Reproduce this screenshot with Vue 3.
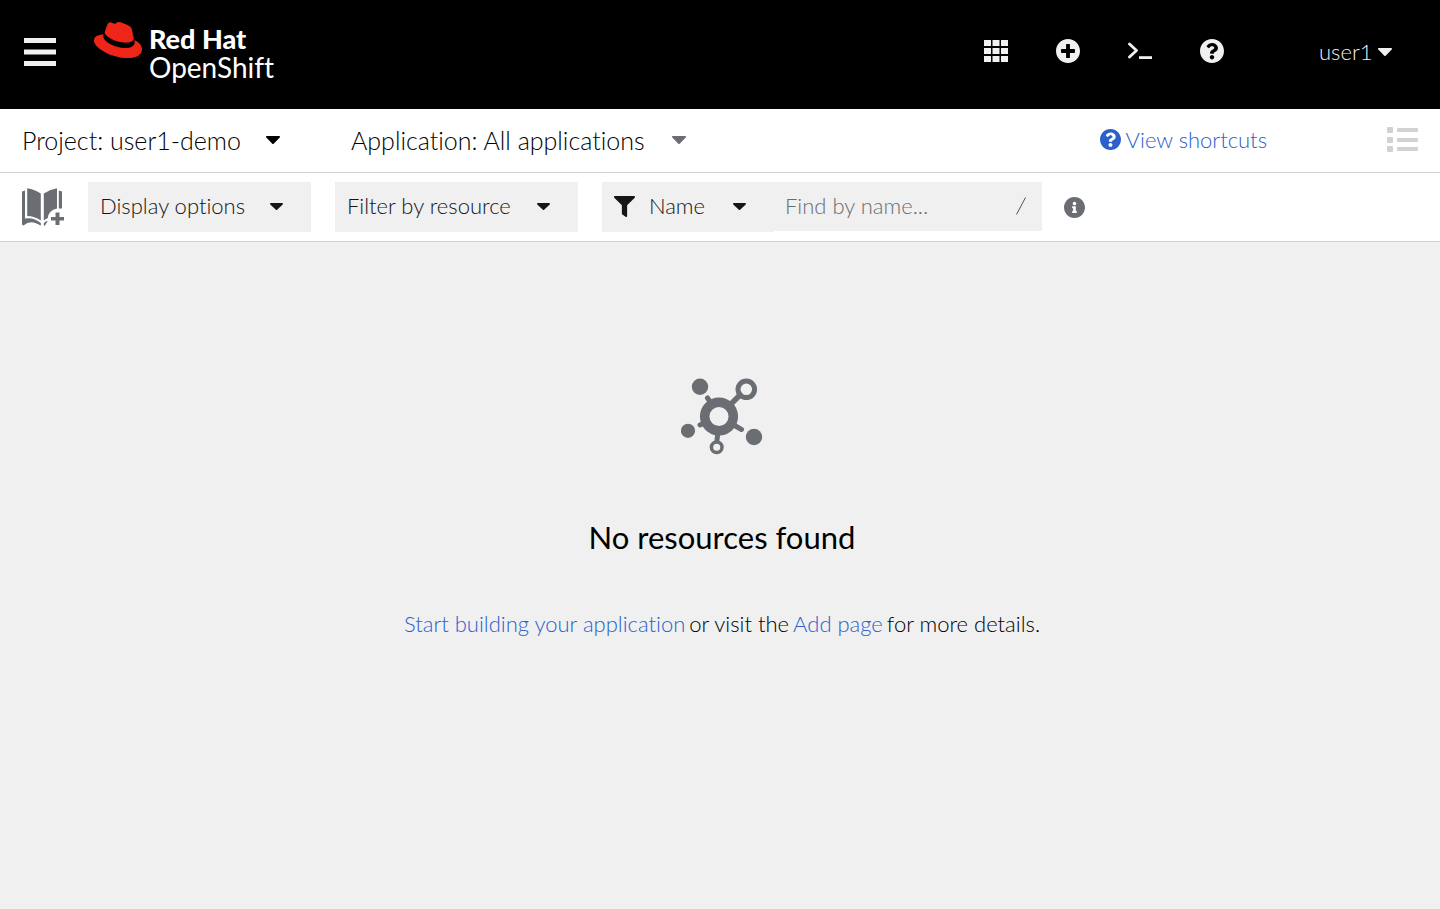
<script setup>
import { ref } from 'vue'

const search = ref('')

const icons = {
  plus: 'M256 8C119 8 8 119 8 256s111 248 248 248 248-111 248-248S393 8 256 8zm144 276c0 6.6-5.4 12-12 12h-92v92c0 6.6-5.4 12-12 12h-56c-6.6 0-12-5.4-12-12v-92h-92c-6.6 0-12-5.4-12-12v-56c0-6.6 5.4-12 12-12h92v-92c0-6.6 5.4-12 12-12h56c6.6 0 12 5.4 12 12v92h92c6.6 0 12 5.4 12 12v56z',
  question: 'M504 256c0 136.997-111.043 248-248 248S8 392.997 8 256C8 119.083 119.043 8 256 8s248 111.083 248 248zM262.655 90c-54.497 0-89.255 22.957-116.549 63.758-3.536 5.286-2.353 12.415 2.715 16.258l34.699 26.31c5.205 3.947 12.621 3.008 16.665-2.122 17.864-22.658 30.113-35.797 57.303-35.797 20.429 0 45.698 13.148 45.698 32.958 0 14.976-12.363 22.667-32.534 33.976C247.128 238.528 216 254.941 216 296v4c0 6.627 5.373 12 12 12h56c6.627 0 12-5.373 12-12v-1.333c0-28.462 83.186-29.647 83.186-106.667 0-58.002-60.165-102-116.531-102zM256 338c-25.365 0-46 20.635-46 46 0 25.364 20.635 46 46 46s46-20.636 46-46c0-25.365-20.635-46-46-46z',
  info: 'M256 8C119.043 8 8 119.083 8 256c0 136.997 111.043 248 248 248s248-111.003 248-248C504 119.083 392.957 8 256 8zm0 110c23.196 0 42 18.804 42 42s-18.804 42-42 42-42-18.804-42-42 18.804-42 42-42zm56 254c0 6.627-5.373 12-12 12h-88c-6.627 0-12-5.373-12-12v-24c0-6.627 5.373-12 12-12h12v-64h-12c-6.627 0-12-5.373-12-12v-24c0-6.627 5.373-12 12-12h64c6.627 0 12 5.373 12 12v100h12c6.627 0 12 5.373 12 12v24z',
  filter: 'M487.976 0H24.028C2.71 0-8.047 25.866 7.058 40.971L192 225.941V432c0 7.831 3.821 15.17 10.237 19.662l80 55.98C298.02 518.69 320 507.493 320 487.98V225.941l184.947-184.97C520.021 25.896 509.338 0 487.976 0z',
  caret: 'M31.3 192h257.3c17.8 0 26.7 21.5 14.1 34.1L174.1 354.8c-7.8 7.8-20.5 7.8-28.3 0L17.2 226.1C4.6 213.5 13.5 192 31.3 192z'
}
</script>

<template>
  <div class="page">
    <header class="masthead">
      <button class="menu" type="button" aria-label="Toggle navigation">
        <svg width="32" height="28" viewBox="0 0 32 28" fill="currentColor">
          <path d="M0 0h32v5H0zM0 11.5h32v5H0zM0 23h32v5H0z" />
        </svg>
      </button>
      <a class="brand" href="#">
        <svg class="hat" width="48" height="36" viewBox="0 3 24 18" aria-hidden="true">
          <path fill="#ee2519" d="M16.009 13.386c1.577 0 3.86-.326 3.86-2.202a1.765 1.765 0 0 0-.04-.431l-.94-4.08c-.216-.898-.406-1.305-1.982-2.093-1.223-.625-3.888-1.658-4.676-1.658-.733 0-.947.946-1.822.946-.842 0-1.467-.706-2.255-.706-.757 0-1.25.515-1.63 1.576 0 0-1.06 2.99-1.197 3.424a.81.81 0 0 0-.028.245c0 1.162 4.577 4.974 10.71 4.974m4.101-1.435c.218 1.032.218 1.14.218 1.277 0 1.765-1.984 2.745-4.593 2.745-5.895.004-11.06-3.451-11.06-5.734a2.326 2.326 0 0 1 .19-.925C2.746 9.415 0 9.794 0 12.217c0 3.969 9.405 8.861 16.851 8.861 5.71 0 7.149-2.582 7.149-4.62 0-1.605-1.387-3.425-3.887-4.512" />
        </svg>
        <span class="brand-text"><strong>Red Hat</strong><span>OpenShift</span></span>
      </a>
      <nav class="tools" aria-label="Tools">
        <button type="button" aria-label="Applications">
          <svg width="24" height="22" viewBox="0 0 24 22" fill="currentColor">
            <path d="M0 0h7v6H0zM8.500 0h7v6h-7zM17 0h7v6h-7zM0 8h7v6H0zM8.500 8h7v6h-7zM17 8h7v6h-7zM0 16h7v6H0zM8.500 16h7v6h-7zM17 16h7v6h-7z" />
          </svg>
        </button>
        <button type="button" aria-label="Add">
          <svg width="24" height="24" viewBox="8 8 496 496" fill="currentColor"><path :d="icons.plus" /></svg>
        </button>
        <button type="button" aria-label="Command line">
          <svg width="24" height="18" viewBox="0 0 24 18" fill="none" stroke="currentColor" stroke-width="2.800" stroke-linecap="round" stroke-linejoin="round">
            <path d="M1.500 2l7 6.500-7 6.500" />
            <path d="M11 14.200h13v2.800H11z" fill="currentColor" stroke="none" />
          </svg>
        </button>
        <button type="button" aria-label="Help">
          <svg width="24" height="24" viewBox="8 8 496 496" fill="currentColor"><path :d="icons.question" /></svg>
        </button>
      </nav>
      <button class="user" type="button">
        user1
        <svg class="caret" width="14" height="8" viewBox="11 192 298 169" preserveAspectRatio="none"><path :d="icons.caret" /></svg>
      </button>
    </header>

    <div class="bar context">
      <button class="picker project" type="button">
        Project: user1-demo
        <svg class="caret" width="14" height="8" viewBox="11 192 298 169" preserveAspectRatio="none"><path :d="icons.caret" /></svg>
      </button>
      <button class="picker application" type="button">
        Application: All applications
        <svg class="caret muted" width="14" height="8" viewBox="11 192 298 169" preserveAspectRatio="none"><path :d="icons.caret" /></svg>
      </button>
      <a class="shortcuts" href="#">
        <svg width="21" height="21" viewBox="8 8 496 496" fill="currentColor"><path :d="icons.question" /></svg>
        View shortcuts
      </a>
      <button class="list" type="button" aria-label="List view" disabled>
        <svg width="31" height="26" viewBox="0 0 31 26" fill="currentColor">
          <rect y="0" width="6" height="6" rx="1" /><rect x="10" y="1" width="21" height="4" rx="1" />
          <rect y="10" width="6" height="6" rx="1" /><rect x="10" y="11" width="21" height="4" rx="1" />
          <rect y="19" width="6" height="6" rx="1" /><rect x="10" y="20" width="21" height="4" rx="1" />
        </svg>
      </button>
    </div>

    <div class="bar filters">
      <button class="catalog" type="button" aria-label="Add to project">
        <svg width="42" height="38" viewBox="0 0 42 38" fill="currentColor">
          <path d="M5.200 0.300Q13 1.500 18.800 5.500V32.500Q12.500 28 5.200 28z" />
          <path d="M35 0.300Q27.500 1.500 21.800 5.500V32.500Q23.500 31 25.800 30Q26.500 22.500 35 20.500z" />
          <path d="M0 3.500L3 2.500V30.500Q11.500 28.800 18.800 35V37.800Q9 31 1.500 37.400L0 36.500z" />
          <path d="M36.800 2.500L40 3.500V20.500H36.800z" />
          <path d="M21.800 35.200Q23.500 33 25.800 33L23 37.500L21.800 37.800z" />
          <path d="M33.500 24.500h4v4.500H42v3.500h-4.500V37h-4v-4.500H29V29h4.500z" />
        </svg>
      </button>
      <button class="select display" type="button">
        Display options
        <svg class="caret" width="13" height="7" viewBox="11 192 298 169" preserveAspectRatio="none"><path :d="icons.caret" /></svg>
      </button>
      <button class="select resource" type="button">
        Filter by resource
        <svg class="caret" width="13" height="7" viewBox="11 192 298 169" preserveAspectRatio="none"><path :d="icons.caret" /></svg>
      </button>
      <div class="search">
        <button class="select name" type="button">
          <svg class="funnel" width="21" height="21" viewBox="0 0 512 512" fill="currentColor"><path :d="icons.filter" /></svg>
          Name
          <svg class="caret" width="13" height="7" viewBox="11 192 298 169" preserveAspectRatio="none"><path :d="icons.caret" /></svg>
        </button>
        <label class="field">
          <input v-model="search" type="text" placeholder="Find by name..." aria-label="Find by name" />
          <svg width="10" height="18" viewBox="0 0 10 18" aria-hidden="true"><path d="M0.500 17.500L9.500 0.500" stroke="#4f5255" stroke-width="1" /></svg>
        </label>
      </div>
      <button class="info" type="button" aria-label="Search help">
        <svg width="21" height="21" viewBox="8 8 496 496" fill="currentColor"><path :d="icons.info" /></svg>
      </button>
    </div>

    <main class="empty">
      <svg width="82" height="78" viewBox="21 18 82 78" fill="currentColor" stroke="currentColor" aria-hidden="true">
        <g fill="none" stroke-linecap="round">
          <path stroke-width="5.500" d="M71 44L80 35" />
          <path stroke-width="5" d="M51 43L47.500 38M45 62.500L40 65M72 64L81.500 69.500M58 72L57 80" />
          <circle cx="59" cy="56.500" r="14.300" stroke-width="9.500" />
          <circle cx="86.300" cy="29.300" r="8.300" stroke-width="5" />
          <circle cx="56.700" cy="87.300" r="5.300" stroke-width="3.500" />
        </g>
        <g stroke="none">
          <circle cx="40" cy="26.700" r="8.200" />
          <circle cx="28" cy="70.800" r="7.100" />
          <circle cx="94" cy="77" r="8.200" />
        </g>
      </svg>
      <h1>No resources found</h1>
      <p>
        <a href="#">Start building your application</a>
        <span>or visit the</span>
        <a href="#">Add page</a>
        <span>for more details.</span>
      </p>
    </main>
  </div>
</template>

<style>
body {
  margin: 0;
  background: #f0f0f0;
}
</style>

<style scoped>
.page {
  min-height: 100vh;
  display: flex;
  flex-direction: column;
  background: #f0f0f0;
  color: #000;
  font-family: Lato, "Noto Sans", sans-serif;
  font-weight: 300;
  font-size: 22px;
  line-height: 32px;
  font-variant-ligatures: none;
}
button {
  display: flex;
  align-items: center;
  padding: 0;
  border: 0;
  background: none;
  color: inherit;
  font: inherit;
  font-variant-ligatures: none;
  white-space: nowrap;
  cursor: pointer;
}
a {
  color: #2b5fcc;
  text-decoration: none;
}
svg {
  display: block;
  flex: none;
}
.caret {
  margin-left: auto;
  fill: currentColor;
}
.masthead {
  display: flex;
  align-items: center;
  box-sizing: border-box;
  height: 109px;
  padding: 0 48px 6px 24px;
  background: #000;
  color: #f0f0f0;
}
.brand {
  display: flex;
  align-items: flex-start;
  gap: 7px;
  margin-left: 38px;
  color: #fff;
}
.brand-text {
  display: flex;
  flex-direction: column;
  padding-top: 3px;
  font-size: 28px;
  line-height: 28px;
  font-weight: 400;
}
.brand-text strong {
  font-weight: 900;
  font-size: 27px;
}
.tools {
  display: flex;
  margin-left: auto;
  padding-bottom: 2px;
}
.tools button {
  justify-content: center;
  width: 72px;
}
.user {
  width: 73px;
  margin-left: 71px;
}
.bar {
  display: flex;
  align-items: center;
  box-sizing: border-box;
  padding: 0 22px 2px;
  background: #fff;
  border-bottom: 1px solid #d2d2d2;
}
.context {
  height: 64px;
}
.picker {
  font-size: 25px;
}
.project {
  width: 258px;
  margin-right: 71px;
}
.application {
  width: 335px;
}
.muted {
  color: #6a6e73;
}
.shortcuts {
  display: flex;
  align-items: center;
  gap: 5px;
  margin-left: auto;
}
.list {
  margin-left: 120px;
  color: #d2d2d2;
}
.filters {
  height: 69px;
  padding-bottom: 0;
  gap: 24px;
  color: #151515;
}
.catalog,
.info {
  color: #6a6e73;
}
.select {
  box-sizing: border-box;
  height: 50px;
  padding: 0 28px 2px 12px;
  background: #f0f0f0;
}
.display {
  width: 223px;
}
.resource {
  width: 243px;
}
.search {
  display: flex;
  align-items: flex-start;
}
.name {
  width: 172px;
}
.funnel {
  margin-right: 14px;
}
.field {
  display: flex;
  align-items: center;
  box-sizing: border-box;
  width: 268px;
  height: 49px;
  padding: 0 16px 2px 11px;
  background: #f0f0f0;
}
.field input {
  flex: 1;
  min-width: 0;
  padding: 0;
  border: 0;
  outline: 0;
  background: none;
  color: inherit;
  font: inherit;
}
.field input::placeholder {
  color: #6a6e73;
  opacity: 1;
}
.info {
  margin-left: -2px;
}
.empty {
  flex: 1;
  display: flex;
  flex-direction: column;
  align-items: center;
  padding: 136px 24px 24px 28px;
  text-align: center;
}
.empty svg {
  color: #6a6e73;
}
.empty h1 {
  margin: 61px 0 0;
  font-size: 31px;
  line-height: 40px;
  font-weight: 400;
}
.empty p {
  display: flex;
  flex-wrap: wrap;
  justify-content: center;
  gap: 0 4px;
  margin: 51px 0 0;
}
</style>
